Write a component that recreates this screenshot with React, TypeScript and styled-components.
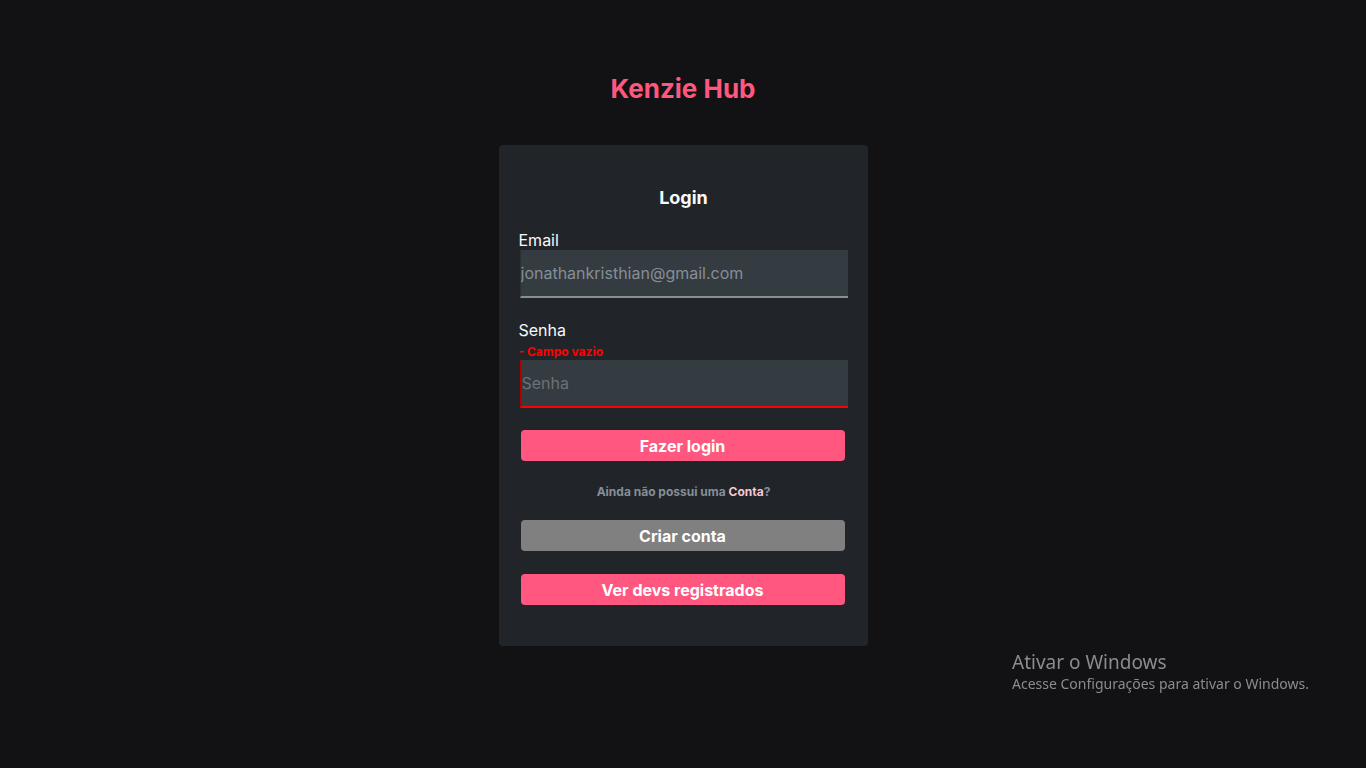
import styled, { createGlobalStyle } from "styled-components";

const GlobalStyle = createGlobalStyle`
  * {
    box-sizing: border-box;
  }
  body {
    margin: 0;
    background: #121214;
    font-family: Inter, "Noto Sans", sans-serif;
    color: #f8f9fa;
  }
`;

const App = () => {
  return (
    <>
      <GlobalStyle />
      <StPage>
        <StLogo>Kenzie Hub</StLogo>
        <StCard>
          <h2>Login</h2>
          <StLabel>Email</StLabel>
          <StInput defaultValue="jonathankristhian@gmail.com" />
          <StLabel className="senha">Senha</StLabel>
          <StError>- Campo vazio</StError>
          <StInput $error placeholder="Senha" type="password" />
          <StButton $scheme="primary" className="login">
            Fazer login
          </StButton>
          <StHint>
            Ainda não possui uma <span>Conta</span>?
          </StHint>
          <StButton $scheme="grey">Criar conta</StButton>
          <StButton $scheme="primary" className="devs">
            Ver devs registrados
          </StButton>
        </StCard>
      </StPage>
      <StWatermark>
        <p className="big">Ativar o Windows</p>
        <p>Acesse Configurações para ativar o Windows.</p>
      </StWatermark>
    </>
  );
};

const StPage = styled.main`
  display: flex;
  flex-direction: column;
  align-items: center;
  padding-top: 73px;
  min-height: 100vh;
`;

const StLogo = styled.h1`
  margin: 0 0 41px 0;
  font-size: 26px;
  line-height: 31px;
  font-weight: 700;
  color: #ff577f;
`;

const StCard = styled.section`
  display: flex;
  flex-direction: column;
  width: 369px;
  padding: 42px 18px 41px 21px;
  background: #212529;
  border-radius: 4px;

  h2 {
    margin: 0 2px 22px 0;
    text-align: center;
    font-size: 18px;
    line-height: 22px;
    font-weight: 700;
  }
`;

const StLabel = styled.label`
  margin-left: -1px;
  font-size: 16px;
  line-height: 19px;
  color: #f8f9fa;

  &.senha {
    margin-top: 23px;
  }
`;

const StError = styled.span`
  margin: 4px 0 1px -1px;
  font-size: 12px;
  line-height: 15px;
  font-weight: 700;
  color: #ff0000;
`;

const StInput = styled.input<{ $error?: boolean }>`
  width: 328px;
  height: 48px;
  padding: 0;
  border: none;
  border-left: ${({ $error }) => ($error ? "2px solid #b00000" : "1px solid #2b3035")};
  border-bottom: 2px solid ${({ $error }) => ($error ? "#ff0000" : "#868e96")};
  background: #343b41;
  font-family: Inter, "Noto Sans", sans-serif;
  font-size: 16px;
  color: #868e96;
  outline: none;

  &::placeholder {
    color: #6b7176;
  }
`;

const StButton = styled.button<{ $scheme: "primary" | "grey" }>`
  width: 324px;
  height: 31px;
  margin-left: 1px;
  border: none;
  border-radius: 4px;
  background: ${({ $scheme }) => ($scheme === "primary" ? "#ff577f" : "#808080")};
  font-family: Inter, "Noto Sans", sans-serif;
  font-size: 16px;
  font-weight: 700;
  color: #ffffff;
  cursor: pointer;

  &.login {
    margin-top: 22px;
  }
  &.devs {
    margin-top: 23px;
  }
`;

const StHint = styled.p`
  margin: 23px 2px 21px 0;
  text-align: center;
  font-size: 12px;
  line-height: 15px;
  font-weight: 700;
  color: #868e96;

  span {
    color: #f8c6d2;
  }
`;

const StWatermark = styled.div`
  position: fixed;
  left: 1012px;
  top: 650px;
  font-family: "Noto Sans", "Open Sans", sans-serif;
  color: #8c8c8e;

  p {
    margin: 0;
    font-size: 14px;
    line-height: 20px;
  }
  .big {
    font-size: 19px;
    line-height: 24px;
  }
`;

export default App;
